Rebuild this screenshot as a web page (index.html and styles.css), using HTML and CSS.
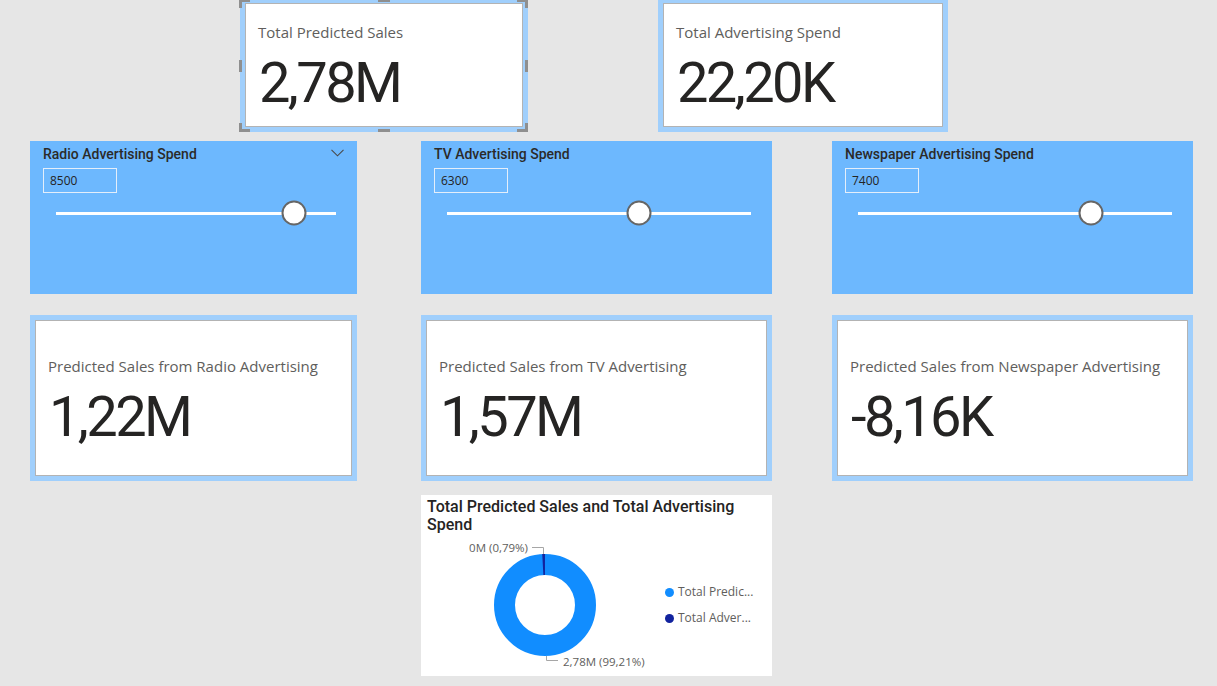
FILE: index.html
```html
<!DOCTYPE html>
<html lang="en">
<head>
<meta charset="utf-8">
<title>Advertising Sales Prediction</title>
<link rel="stylesheet" href="styles.css">
</head>
<body>
<div class="canvas">
  <div class="row row-top">
    <div class="card card-top card-sales">
      <div class="card-inner">
        <div class="card-title">Total Predicted Sales</div>
        <div class="card-value">2,78M</div>
      </div>
      <span class="hd hd-tl"></span>
      <span class="hd hd-tr"></span>
      <span class="hd hd-bl"></span>
      <span class="hd hd-br"></span>
      <span class="hd hd-ml"></span>
      <span class="hd hd-mr"></span>
      <span class="hd hd-tm"></span>
      <span class="hd hd-bm"></span>
    </div>
    <div class="card card-top card-spend">
      <div class="card-inner">
        <div class="card-title">Total Advertising Spend</div>
        <div class="card-value">22,20K</div>
      </div>
    </div>
  </div>

  <div class="row row-slicers">
    <div class="slicer col1">
      <div class="slicer-head">
        <span class="slicer-title">Radio Advertising Spend</span>
        <svg class="chev" width="13" height="8" viewBox="0 0 13 8"><polyline points="0.5,0.8 6.5,6.8 12.5,0.8" fill="none" stroke="#4a4a4a" stroke-width="1.1"/></svg>
      </div>
      <div class="slicer-input">8500</div>
      <div class="slider"><div class="track"></div><span class="thumb" style="left:85%"></span></div>
    </div>
    <div class="slicer col2">
      <div class="slicer-head">
        <span class="slicer-title">TV Advertising Spend</span>
      </div>
      <div class="slicer-input">6300</div>
      <div class="slider"><div class="track"></div><span class="thumb" style="left:63.2%"></span></div>
    </div>
    <div class="slicer col3">
      <div class="slicer-head">
        <span class="slicer-title">Newspaper Advertising Spend</span>
      </div>
      <div class="slicer-input">7400</div>
      <div class="slider"><div class="track"></div><span class="thumb" style="left:74.2%"></span></div>
    </div>
  </div>

  <div class="row row-cards">
    <div class="card card-mid col1">
      <div class="card-inner">
        <div class="card-title">Predicted Sales from Radio Advertising</div>
        <div class="card-value">1,22M</div>
      </div>
    </div>
    <div class="card card-mid col2">
      <div class="card-inner">
        <div class="card-title">Predicted Sales from TV Advertising</div>
        <div class="card-value">1,57M</div>
      </div>
    </div>
    <div class="card card-mid col3">
      <div class="card-inner">
        <div class="card-title">Predicted Sales from Newspaper Advertising</div>
        <div class="card-value">-8,16K</div>
      </div>
    </div>
  </div>

  <div class="row row-chart">
    <div class="chart col2">
      <div class="chart-title">Total Predicted Sales and Total Advertising Spend</div>
      <div class="chart-body">
        <svg class="donut" width="244" height="142" viewBox="0 0 244 142">
          <circle cx="124" cy="71" r="40.5" fill="none" stroke="#118dff" stroke-width="21"/>
          <circle cx="124" cy="71" r="40.5" fill="none" stroke="#12239e" stroke-width="21" stroke-dasharray="2.2 400" transform="rotate(-93.1 124 71)"/>
          <polyline points="111,13.5 122.5,13.5 122.5,20" fill="none" stroke="#a6a6a6" stroke-width="1"/>
          <text class="lbl" x="107" y="17.5" text-anchor="end">0M (0,79%)</text>
          <polyline points="125.5,122 125.5,126.5 137,126.5" fill="none" stroke="#a6a6a6" stroke-width="1"/>
          <text class="lbl" x="142" y="132">2,78M (99,21%)</text>
        </svg>
        <div class="legend">
          <div class="legend-item"><span class="dot dot-sales"></span><span>Total Predic...</span></div>
          <div class="legend-item"><span class="dot dot-spend"></span><span>Total Adver...</span></div>
        </div>
      </div>
    </div>
  </div>
</div>
</body>
</html>
```

FILE: styles.css
```css
html, body {
  margin: 0;
  padding: 0;
}

body {
  background: #e6e6e6;
  font-family: "Open Sans", "Noto Sans", sans-serif;
  color: #252423;
  width: 1217px;
  height: 686px;
  overflow: hidden;
}

.canvas {
  display: flex;
  flex-direction: column;
}

.row {
  display: flex;
  flex-shrink: 0;
}

.row-top {
  margin-top: -2px;
  height: 134px;
  padding-left: 240px;
  gap: 130px;
}

.row-slicers {
  margin-top: 9px;
  height: 153px;
  padding-left: 30px;
}

.row-cards {
  margin-top: 21px;
  height: 166px;
  padding-left: 30px;
}

.row-chart {
  margin-top: 14px;
  height: 181px;
  padding-left: 30px;
}

.col1 { width: 327px; }
.col2 { width: 351px; margin-left: 64px; }
.col3 { width: 361px; margin-left: 60px; }
.row-chart .col2 { margin-left: 391px; }

/* ---------- KPI cards ---------- */
.card {
  position: relative;
  box-sizing: border-box;
  background: #a0cffc;
  padding: 5px;
  display: flex;
}

.card-sales { width: 288px; }
.card-spend { width: 290px; }

.card-inner {
  flex: 1;
  background: #ffffff;
  border: 1px solid #b3b3b3;
  padding: 0 12px;
  display: flex;
  flex-direction: column;
  justify-content: center;
}

.card-top .card-inner {
  padding-top: 3px;
}

.card-title {
  font-family: "Open Sans", "Noto Sans", sans-serif;
  font-size: 15px;
  line-height: 20px;
  color: #605e5c;
  white-space: nowrap;
}

.card-value {
  font-family: Roboto, "Noto Sans", sans-serif;
  font-size: 56px;
  line-height: 56px;
  letter-spacing: -2.6px;
  color: #252423;
  margin-top: 13px;
  padding-left: 1px;
  white-space: nowrap;
}

.card-mid .card-inner {
  padding-top: 4px;
}

/* selection handles */
.hd {
  position: absolute;
  box-sizing: border-box;
  border-color: #8f8f8f;
  border-style: solid;
  border-width: 0;
}
.hd-tl { left: -1px; top: 2px; width: 11px; height: 8px; border-left-width: 3px; border-top-width: 2px; }
.hd-tr { right: 0; top: 2px; width: 11px; height: 8px; border-right-width: 3px; border-top-width: 2px; }
.hd-bl { left: -1px; bottom: 0; width: 11px; height: 9px; border-left-width: 3px; border-bottom-width: 3px; }
.hd-br { right: 0; bottom: 0; width: 11px; height: 9px; border-right-width: 3px; border-bottom-width: 3px; }
.hd-ml { left: -1px; top: 62px; width: 3px; height: 12px; background: #8f8f8f; }
.hd-mr { right: 0; top: 62px; width: 3px; height: 12px; background: #8f8f8f; }
.hd-tm { left: 138px; top: 2px; width: 12px; height: 2px; background: #8f8f8f; }
.hd-bm { left: 138px; bottom: 0; width: 12px; height: 3px; background: #8f8f8f; }

/* ---------- slicers ---------- */
.slicer {
  box-sizing: border-box;
  background: #6db8fe;
  padding-top: 5px;
  display: flex;
  flex-direction: column;
}

.slicer-head {
  display: flex;
  align-items: center;
  padding: 0 13px;
  height: 16px;
}

.slicer-title {
  font-family: Roboto, "Noto Sans", sans-serif;
  font-weight: 500;
  font-size: 14px;
  line-height: 16px;
  color: #2b2a29;
  white-space: nowrap;
}

.chev {
  margin-left: auto;
  margin-top: -2px;
  margin-right: 0;
}

.slicer-input {
  box-sizing: border-box;
  margin: 6px 0 0 13px;
  width: 74px;
  height: 25px;
  border: 1px solid #e4eefa;
  padding-left: 6px;
  font-family: "Open Sans", "Noto Sans", sans-serif;
  font-size: 12px;
  line-height: 23px;
  color: #252423;
}

.slider {
  position: relative;
  margin: 7px 21px 0 26px;
  height: 26px;
  display: flex;
  align-items: center;
}

.track {
  flex: 1;
  height: 3px;
  background: #ffffff;
}

.thumb {
  position: absolute;
  top: 50%;
  width: 25px;
  height: 25px;
  box-sizing: border-box;
  border-radius: 50%;
  background: #ffffff;
  border: 2px solid #666666;
  transform: translate(-50%, -50%);
}

/* ---------- donut chart ---------- */
.chart {
  background: #ffffff;
  display: flex;
  flex-direction: column;
}

.chart-title {
  padding: 3px 6px 0 6px;
  font-family: Roboto, "Noto Sans", sans-serif;
  font-weight: 500;
  font-size: 16px;
  line-height: 18px;
  color: #252423;
}

.chart-body {
  flex: 1;
  display: flex;
  align-items: center;
}

.donut {
  flex-shrink: 0;
  display: block;
}

.lbl {
  font-family: "Open Sans", "Noto Sans", sans-serif;
  font-size: 11.5px;
  fill: #605e5c;
}

.legend {
  display: flex;
  flex-direction: column;
  gap: 10px;
}

.legend-item {
  display: flex;
  align-items: center;
  gap: 4px;
  font-family: "Open Sans", "Noto Sans", sans-serif;
  font-size: 12px;
  line-height: 16px;
  color: #605e5c;
  white-space: nowrap;
}

.dot {
  width: 9px;
  height: 9px;
  border-radius: 50%;
  flex-shrink: 0;
}

.dot-sales { background: #118dff; }
.dot-spend { background: #12239e; }
```
